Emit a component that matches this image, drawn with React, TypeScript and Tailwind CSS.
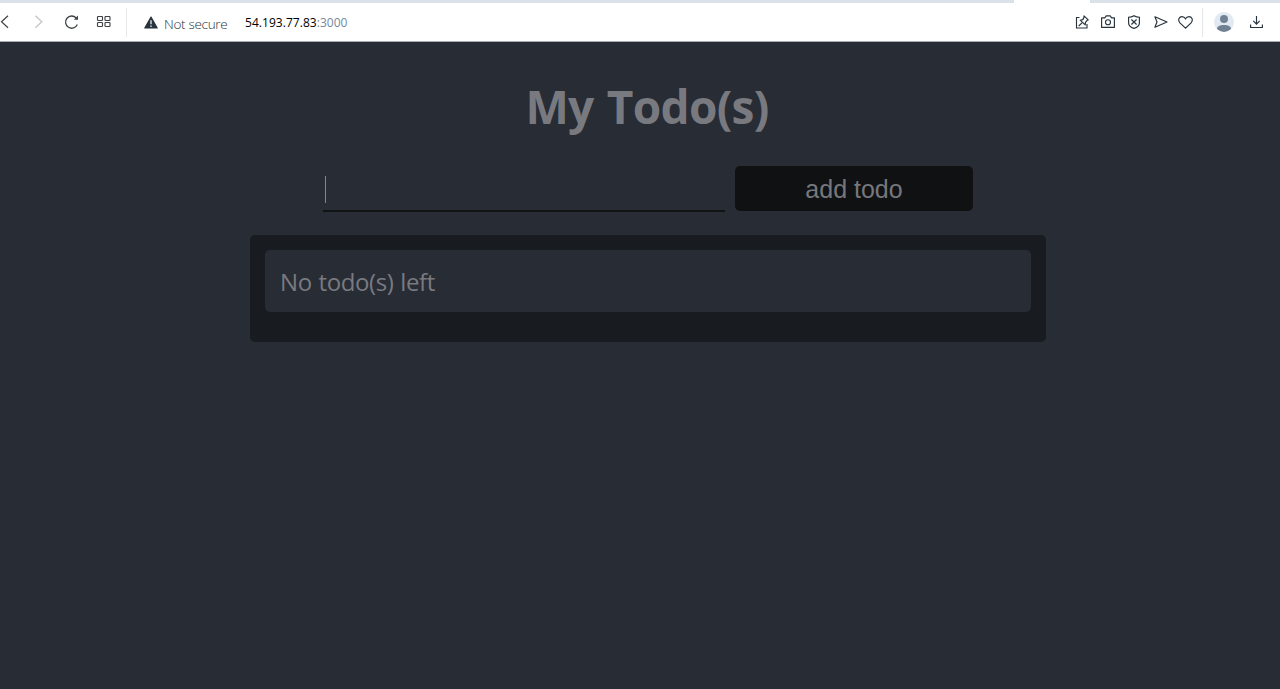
import type { ReactNode } from 'react'

type IconProps = { w: number; h: number; className?: string; children: ReactNode }

function Icon({ w, h, className = '', children }: IconProps) {
  return (
    <svg
      width={w}
      height={h}
      viewBox={`0 0 ${w} ${h}`}
      fill="none"
      stroke="currentColor"
      strokeWidth="1.15"
      className={`shrink-0 ${className}`}
    >
      {children}
    </svg>
  )
}

function BrowserBar() {
  return (
    <header className="shrink-0">
      <div className="flex h-[3px] bg-[#dae1e9]">
        <div className="ml-[1014px] w-[76px] bg-white" />
      </div>
      <div className="flex h-[39px] items-start border-b border-[#a9adb5] bg-white text-[#27333d]">
        <Icon w={10} h={14} className="mt-3 text-[#3f4346]">
          <path d="M8 .8 1.500 6.800 8 12.800" strokeWidth="1.2" />
        </Icon>
        <Icon w={10} h={14} className="mt-3 ml-6 text-[#c3c5c7]">
          <path d="m1.400.8 6.400 6-6.400 6" strokeWidth="1.3" />
        </Icon>
        <Icon w={16} h={16} className="mt-[11px] ml-5 text-[#3f4346]">
          <path d="M13.300 10.500A6.100 6.100 0 1 1 12.200 4" strokeWidth="1.3" />
          <path d="M14 1.600v4.200H9.800z" fill="currentColor" stroke="none" />
        </Icon>
        <Icon w={15} h={12} className="mt-[13px] ml-4 text-[#3f4346]">
          <rect x="1.500" y=".5" width="5" height="4" rx=".8" />
          <rect x="9" y=".5" width="5" height="4" rx=".8" />
          <rect x="1.500" y="6.500" width="5" height="4" rx=".8" />
          <rect x="9" y="6.500" width="5" height="4" rx=".8" />
        </Icon>
        <div className="mt-[5px] ml-[15px] h-[29px] w-px bg-[#e7eaed]" />
        <Icon w={14} h={13} className="mt-[13px] ml-[17px]">
          <path d="M7 1 13.200 12H.8z" fill="currentColor" strokeLinejoin="round" />
          <path d="M7 4.300v4M7 9.500v1.500" stroke="#fff" strokeWidth="1.2" />
        </Icon>
        <span className="mt-3 ml-1.5 w-[81px] whitespace-nowrap font-['Open_Sans','Noto_Sans',sans-serif] text-[13.5px] leading-[18px] font-light tracking-[-0.3px] text-[#27333d]">
          Not secure
        </span>
        <span className="mt-[11px] font-['Open_Sans','Noto_Sans',sans-serif] text-[12px] leading-[18px] tracking-[0.04px] whitespace-nowrap text-black">
          54.193.77.83<span className="text-[#75879a]">:3000</span>
        </span>
        <div className="ml-auto flex items-start">
          <Icon w={14} h={14} className="mt-3">
            <path d="M4.500 2.500H1.500v10.500h10.500V9" />
            <path d="m9 .9 4.200 4-1.100.4-1.600 2-.3 2.600-5-4.700 2.600-.6L9 2.400z" strokeLinejoin="round" />
            <path d="M7.200 7.600 3.700 11" />
          </Icon>
          <Icon w={14} h={13} className="mt-[12px] ml-3">
            <path d="M.6 2.800h3.200L5.200.9h4L10.600 2.800h2.800v9.600H.6z" strokeLinejoin="round" />
            <circle cx="7" cy="7.200" r="2.500" />
          </Icon>
          <Icon w={12} h={14} className="mt-3 ml-[13px]">
            <path d="M6 .7C7.700 1.800 9.500 2.200 11.400 2.200V8c0 2.600-2.500 4.500-5.400 5.400C3.100 12.500.6 10.600.6 8V2.200C2.500 2.200 4.300 1.800 6 .7z" />
            <path d="m3.400 4.500 5.200 5M8.600 4.500l-5.200 5" />
          </Icon>
          <Icon w={14} h={12} className="mt-[13px] ml-3.5">
            <path d="M.9.8 13 6 .9 11.200 3 6z" strokeLinejoin="round" />
          </Icon>
          <Icon w={15} h={13} className="mt-[13px] ml-[10px]">
            <path d="M7.500 12.200 1.900 6.800C-.7 3.600 1.500.6 4 .6c1.600 0 2.800.9 3.500 2.200C8.200 1.500 9.400.6 11 .6c2.500 0 4.700 3 2.100 6.200z" />
          </Icon>
          <div className="mt-[5px] ml-[9px] h-[29px] w-px bg-[#e4e6e9]" />
          <svg width="20" height="20" viewBox="0 0 20 20" className="mt-[9px] ml-[11px]">
            <circle cx="10" cy="10" r="10" fill="#e1eaf3" />
            <circle cx="10" cy="7" r="4" fill="#6f8192" />
            <path d="M3 17.100c0-2.800 3-4.100 7-4.100s7 1.300 7 4.100Q14 20 10 20t-7-2.900z" fill="#6f8192" />
          </svg>
          <Icon w={13} h={12} className="mt-[13px] mr-[17px] ml-4">
            <path d="M6.500 0v8M3.300 4.900l3.200 3.200 3.200-3.200M.6 8.500v3h11.800v-3" />
          </Icon>
        </div>
      </div>
    </header>
  )
}

export default function App() {
  return (
    <div className="flex h-[689px] w-[1280px] flex-col overflow-hidden bg-[#282c35]">
      <BrowserBar />
      <main className="ml-[250px] flex w-[796px] flex-col items-center text-[#797a80]">
        <h1 className="mt-[32px] mr-0.5 h-[64px] font-['Open_Sans','Noto_Sans',sans-serif] text-[46px] leading-[64px] font-bold tracking-[-0.7px] whitespace-nowrap [word-spacing:2px]">
          My Todo(s)
        </h1>
        <form className="mt-7 flex h-[46px] w-[650px] items-start gap-2.5">
          <div className="flex h-[46px] w-[402px] items-start border-b-2 border-[#121314] pt-2.5 pl-0.5">
            <span className="h-[27px] w-px bg-[#85868b]" />
          </div>
          <button
            type="button"
            className="h-[45px] w-[238px] rounded-[5px] bg-[#101112] pt-px font-['Liberation_Sans',Arial,sans-serif] text-[25px] leading-[44px] text-[#76777c]"
          >
            add todo
          </button>
        </form>
        <section className="mt-[23px] h-[107px] w-full rounded-[5px] bg-[#181b1f] p-[15px]">
          <div className="h-[62px] rounded-[5px] bg-[#282c35] pt-[15px] pl-[15px] font-['Open_Sans','Noto_Sans',sans-serif] text-[24px] leading-[34px] tracking-[-0.4px] [word-spacing:1px]">
            No todo(s) left
          </div>
        </section>
      </main>
    </div>
  )
}
